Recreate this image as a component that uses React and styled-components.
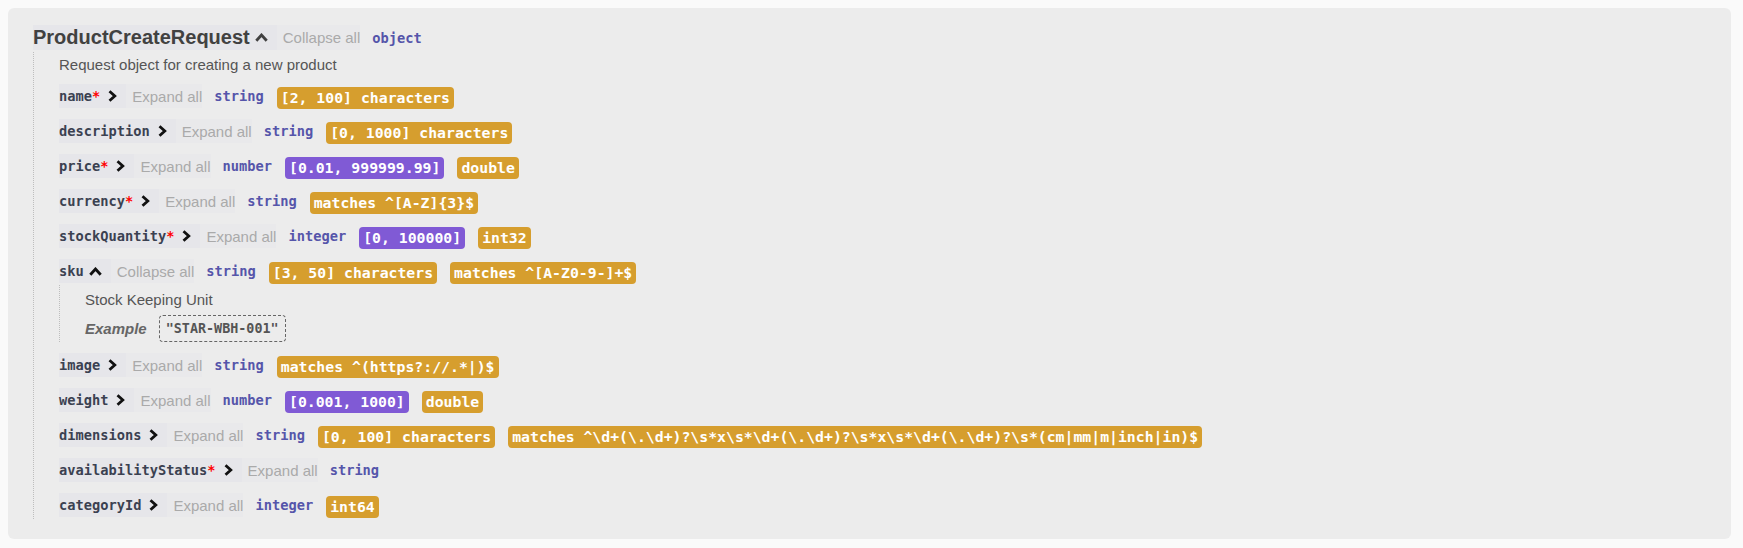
import React from "react";
import styled, { createGlobalStyle } from "styled-components";

const GlobalStyle = createGlobalStyle`
  html, body {
    margin: 0;
    background: #fafafa;
  }
  body {
    padding: 8px 12px 9px 8px;
    font-family: "Liberation Sans", Arial, sans-serif;
  }
`;

const mono = `"DejaVu Sans Mono", "Liberation Mono", monospace`;

const Panel = styled.div`
  background: #ececec;
  border-radius: 6px;
  padding: 17px 12px 20px 25px;
`;

const HeaderRow = styled.div`
  display: flex;
  align-items: center;
  height: ${(p) => (p.$title ? 25 : 24)}px;
`;

const Toggle = styled.div`
  display: flex;
  align-items: center;
  height: 100%;
  background: #e6e6ea;
  padding-right: 9px;
  cursor: pointer;
`;

const TitleText = styled.span`
  font-size: 20px;
  font-weight: bold;
  color: #414141;
`;

const PropName = styled.span`
  font-family: ${mono};
  font-size: 13.7px;
  font-weight: bold;
  color: #3b4151;
`;

const Required = styled.span`
  font-family: ${mono};
  font-size: 13.7px;
  font-weight: bold;
  color: #ff0000;
`;

const Chevron = styled.svg`
  margin-left: ${(p) => (p.$up ? 5 : 8)}px;
  display: block;
`;

const DeepButton = styled.div`
  display: flex;
  align-items: center;
  height: 100%;
  background: #e9e9eb;
  padding-left: 6px;
  font-size: 15px;
  color: #aaaaaa;
  cursor: pointer;
`;

const Type = styled.span`
  margin-left: 12px;
  font-family: ${mono};
  font-size: 13.7px;
  font-weight: bold;
  color: #5555aa;
`;

const Badge = styled.span`
  margin-left: 13px;
  margin-top: 4px;
  height: 22px;
  line-height: 22px;
  padding: 0 4px;
  border-radius: 4px;
  background: ${(p) => (p.$kind === "number" ? "#805ad5" : "#d69e2e")};
  color: #fff;
  font-family: ${mono};
  font-size: 14.8px;
  font-weight: bold;
  white-space: pre;
`;

const Body = styled.div`
  display: flex;
  flex-direction: column;
  margin-top: 2px;
  padding: ${(p) => (p.$nested ? "7px 0 0 25px" : "5px 0 2px 25px")};
  border-left: 1px dotted #bdbdbd;
`;

const Description = styled.div`
  font-size: 15px;
  line-height: 16px;
  color: #555;
`;

const Property = styled.div`
  margin-top: 11px;
`;

const ExampleRow = styled.div`
  display: flex;
  align-items: center;
  margin-top: 7px;
`;

const ExampleLabel = styled.span`
  font-size: 15px;
  font-weight: bold;
  font-style: italic;
  color: #666;
`;

const ExampleValue = styled.span`
  margin-left: 12px;
  height: 25px;
  line-height: 25px;
  padding: 0 6px;
  border: 1px dashed #666;
  border-radius: 4px;
  font-family: ${mono};
  font-size: 13.4px;
  font-weight: bold;
  color: #555;
`;

function ChevronRight() {
  return (
    <Chevron width="9" height="12" viewBox="0 0 9 12">
      <polyline
        points="1.5,1.2 6.8,6 1.5,10.8"
        fill="none"
        stroke="#111"
        strokeWidth="2.8"
      />
    </Chevron>
  );
}

function ChevronUp({ color = "#111" }) {
  return (
    <Chevron $up width="13" height="9" viewBox="0 0 13 9">
      <polyline
        points="1.3,7.8 6.5,2 11.7,7.8"
        fill="none"
        stroke={color}
        strokeWidth="2.8"
      />
    </Chevron>
  );
}

const properties = [
  {
    name: "name",
    required: true,
    type: "string",
    constraints: [{ text: "[2, 100] characters" }],
  },
  {
    name: "description",
    type: "string",
    constraints: [{ text: "[0, 1000] characters" }],
  },
  {
    name: "price",
    required: true,
    type: "number",
    constraints: [
      { text: "[0.01, 999999.99]", kind: "number" },
      { text: "double" },
    ],
  },
  {
    name: "currency",
    required: true,
    type: "string",
    constraints: [{ text: "matches ^[A-Z]{3}$" }],
  },
  {
    name: "stockQuantity",
    required: true,
    type: "integer",
    constraints: [{ text: "[0, 100000]", kind: "number" }, { text: "int32" }],
  },
  {
    name: "sku",
    open: true,
    type: "string",
    constraints: [
      { text: "[3, 50] characters" },
      { text: "matches ^[A-Z0-9-]+$" },
    ],
    description: "Stock Keeping Unit",
    example: '"STAR-WBH-001"',
  },
  {
    name: "image",
    type: "string",
    constraints: [{ text: "matches ^(https?://.*|)$" }],
  },
  {
    name: "weight",
    type: "number",
    constraints: [{ text: "[0.001, 1000]", kind: "number" }, { text: "double" }],
  },
  {
    name: "dimensions",
    type: "string",
    constraints: [
      { text: "[0, 100] characters" },
      {
        text: "matches ^\\d+(\\.\\d+)?\\s*x\\s*\\d+(\\.\\d+)?\\s*x\\s*\\d+(\\.\\d+)?\\s*(cm|mm|m|inch|in)$",
      },
    ],
  },
  {
    name: "availabilityStatus",
    required: true,
    type: "string",
    constraints: [],
  },
  {
    name: "categoryId",
    type: "integer",
    constraints: [{ text: "int64" }],
  },
];

function PropertyRow({ prop }) {
  return (
    <Property>
      <HeaderRow>
        <Toggle>
          <PropName>{prop.name}</PropName>
          {prop.required && <Required>*</Required>}
          {prop.open ? <ChevronUp /> : <ChevronRight />}
        </Toggle>
        <DeepButton>{prop.open ? "Collapse all" : "Expand all"}</DeepButton>
        <Type>{prop.type}</Type>
        {prop.constraints.map((c) => (
          <Badge key={c.text} $kind={c.kind}>
            {c.text}
          </Badge>
        ))}
      </HeaderRow>
      {prop.open && (
        <Body $nested>
          <Description>{prop.description}</Description>
          <ExampleRow>
            <ExampleLabel>Example</ExampleLabel>
            <ExampleValue>{prop.example}</ExampleValue>
          </ExampleRow>
        </Body>
      )}
    </Property>
  );
}

export default function App() {
  return (
    <>
      <GlobalStyle />
      <Panel>
        <HeaderRow $title>
          <Toggle>
            <TitleText>ProductCreateRequest</TitleText>
            <ChevronUp color="#414141" />
          </Toggle>
          <DeepButton>Collapse all</DeepButton>
          <Type>object</Type>
        </HeaderRow>
        <Body>
          <Description>Request object for creating a new product</Description>
          {properties.map((p) => (
            <PropertyRow key={p.name} prop={p} />
          ))}
        </Body>
      </Panel>
    </>
  );
}
